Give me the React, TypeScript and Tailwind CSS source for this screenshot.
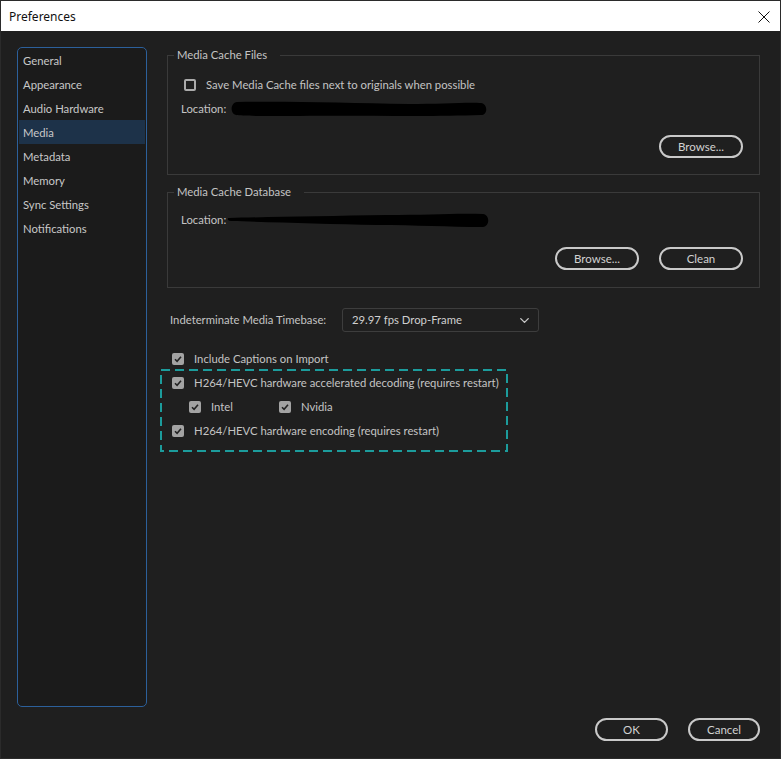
import { ChevronDown } from 'lucide-react';
import type { ReactNode } from 'react';

const NAV = ['General', 'Appearance', 'Audio Hardware', 'Media', 'Metadata', 'Memory', 'Sync Settings', 'Notifications'];

function CheckBox({ checked }: { checked: boolean }) {
  if (!checked) {
    return <span className="block w-[12px] h-[12px] border-2 border-[#ababab] rounded-[2px] shrink-0" />;
  }
  return (
    <span className="flex items-center justify-center w-[12px] h-[12px] bg-[#a3a3a3] rounded-[2px] shrink-0">
      <svg width="10" height="10" viewBox="0 0 10 10">
        <path d="M2 5.2 L4.1 7.3 L8 2.8" fill="none" stroke="#222" strokeWidth="1.6" />
      </svg>
    </span>
  );
}

function Row({ checked, label, className = '' }: { checked: boolean; label: string; className?: string }) {
  return (
    <div className={`flex items-center h-[16px] gap-[10px] whitespace-nowrap ${className}`}>
      <CheckBox checked={checked} />
      <span>{label}</span>
    </div>
  );
}

function Btn({ children, w = 'w-[84px]' }: { children: ReactNode; w?: string }) {
  return (
    <button className={`${w} h-[23px] rounded-full border-2 border-[#c9c9c9] text-[#d2d2d2] text-[11.5px] flex items-center justify-center leading-none`}>
      {children}
    </button>
  );
}

function Group({ title, children, className = '' }: { title: string; children: ReactNode; className?: string }) {
  return (
    <fieldset className={`border border-[#3a3a3a] ${className}`}>
      <legend className="ml-[6px] pl-[3px] pr-[13px] h-[16px] leading-[16px] text-[#c4c4c4]">{title}</legend>
      {children}
    </fieldset>
  );
}

// black marker scribbles that hide the cache paths
function Redact({ variant }: { variant: 1 | 2 }) {
  if (variant === 1) {
    return (
      <svg width="260" height="18" viewBox="0 0 260 18" className="block">
        <path d="M8 2 C60 1 120 3 180 4 C210 4 240 2 252 3 C259 4 259 15 252 15 C200 17 120 15 60 16 C30 16 12 16 7 15 C1 14 1 3 8 2 Z" fill="#000" />
      </svg>
    );
  }
  return (
    <svg width="264" height="18" viewBox="0 0 264 18" className="block">
      <path d="M2 7 C40 6 100 5 160 4 C200 4 230 2 256 3 C263 4 263 15 256 16 C220 16 190 14 150 14 C100 13 40 11 4 10 C0 10 0 7 2 7 Z" fill="#000" />
    </svg>
  );
}

export default function App() {
  return (
    <div className="w-[781px] h-[759px] border border-[#2b2b2b] bg-[#1f1f1f] flex flex-col text-[11.3px] text-[#c4c4c4]" style={{ fontFamily: 'Lato, "Noto Sans", sans-serif' }}>
      <div className="h-[30px] bg-white flex items-center justify-between pl-[8px] pr-[8px] pt-[1px] shrink-0">
        <span className="text-[#111] text-[12px]" style={{ fontFamily: '"Noto Sans", sans-serif' }}>Preferences</span>
        <svg width="14" height="14" viewBox="0 0 14 14" className="mr-[1px]">
          <path d="M1.5 1.5 L12.5 12.5 M12.5 1.5 L1.5 12.5" stroke="#111" strokeWidth="1" />
        </svg>
      </div>

      <div className="flex pt-[16px] pl-[16px] pr-[20px]">
        <nav className="w-[130px] h-[660px] border border-[#2c609b] rounded-[5px] bg-[#1b1b1b] px-[1px] shrink-0">
          {NAV.map((item) => (
            <div key={item} className={`h-[24px] flex items-center pl-[4px] pt-[2px] text-[#c8c8c8] ${item === 'Media' ? 'bg-[#1d3249]' : ''}`}>
              {item}
            </div>
          ))}
        </nav>

        <div className="ml-[20px] w-[593px] flex flex-col">
          <Group title="Media Cache Files">
            <div className="pt-[14px] pl-[16px]">
              <div className="flex items-center h-[16px] gap-[10px] whitespace-nowrap">
                <CheckBox checked={false} />
                <span>Save Media Cache files next to originals when possible</span>
              </div>
            </div>
            <div className="mt-[8px] pl-[13px] h-[16px] flex items-center">
              <span>Location:</span>
              <span className="ml-[3px]"><Redact variant={1} /></span>
            </div>
            <div className="mt-[18px] pr-[16px] pb-[16px] flex justify-end">
              <Btn>Browse...</Btn>
            </div>
          </Group>

          <Group title="Media Cache Database" className="mt-[9px]">
            <div className="pt-[12px] pl-[13px] h-[28px] flex items-end">
              <div className="h-[16px] flex items-center">
                <span>Location:</span>
                <span className="ml-[1px]"><Redact variant={2} /></span>
              </div>
            </div>
            <div className="mt-[19px] pr-[16px] pb-[17px] flex justify-end gap-[20px]">
              <Btn>Browse...</Btn>
              <Btn>Clean</Btn>
            </div>
          </Group>

          <div className="mt-[20px] flex items-center pl-[3px] whitespace-nowrap">
            <span className="w-[172px]">Indeterminate Media Timebase:</span>
            <div className="w-[197px] h-[24px] border border-[#3d3d3d] rounded-[3px] flex items-center justify-between pl-[9px] pr-[6px] text-[#cfcfcf]">
              <span>29.97 fps Drop-Frame</span>
              <ChevronDown size={15} strokeWidth={2.2} color="#c8c8c8" />
            </div>
          </div>

          <Row checked label="Include Captions on Import" className="mt-[19px] pl-[5px]" />

          <div className="relative mt-[2px] -ml-[7px] w-[348px] pt-[6px] pb-[13px] pl-[12px]">
            <svg className="absolute inset-0 pointer-events-none" width="348" height="83" viewBox="0 0 348 83">
              <rect x="1" y="1" width="346" height="81" fill="none" stroke="#1c9c9c" strokeWidth="2" strokeDasharray="9 5" />
            </svg>
            <Row checked label="H264/HEVC hardware accelerated decoding (requires restart)" />
            <div className="flex mt-[8px] pl-[17px]">
              <Row checked label="Intel" className="w-[90px]" />
              <Row checked label="Nvidia" />
            </div>
            <Row checked label="H264/HEVC hardware encoding (requires restart)" className="mt-[8px]" />
          </div>
        </div>
      </div>

      <div className="flex justify-end gap-[20px] pt-[11px] pr-[20px]">
        <Btn w="w-[73px]">OK</Btn>
        <Btn w="w-[72px]">Cancel</Btn>
      </div>
    </div>
  );
}
